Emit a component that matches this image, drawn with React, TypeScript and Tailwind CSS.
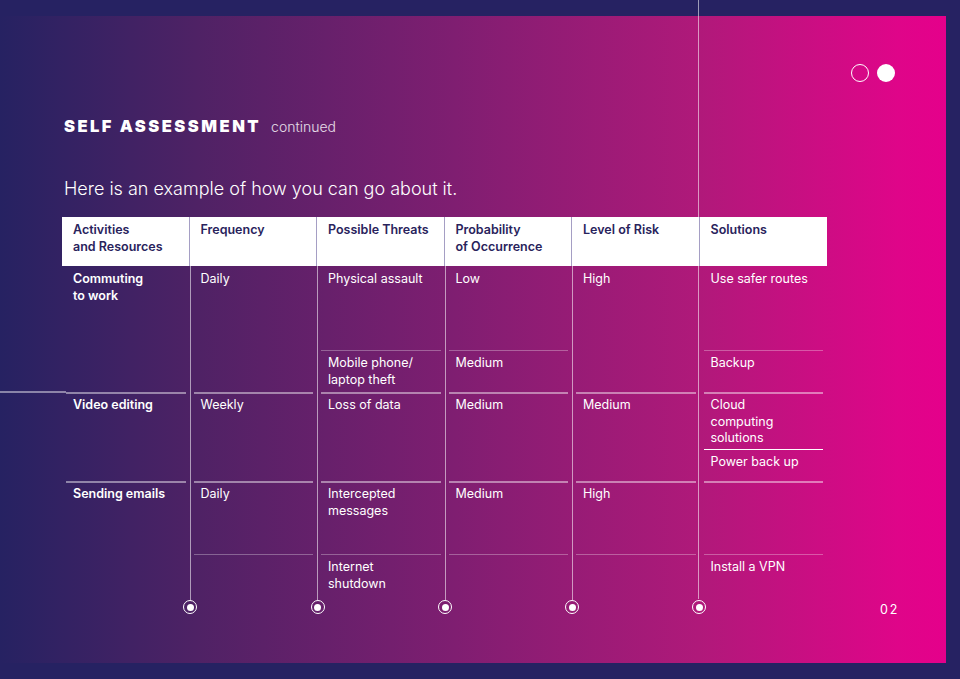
import React from "react";

type Line = "none" | "main" | "sub" | "solid";
type Cell = { t: string[]; h: number; line: Line };
type Col = { head: string[]; bold?: boolean; cells: Cell[] };

const cols: Col[] = [
  {
    head: ["Activities", "and Resources"],
    bold: true,
    cells: [
      { t: ["Commuting", "to work"], h: 126, line: "none" },
      { t: ["Video editing"], h: 89, line: "main" },
      { t: ["Sending emails"], h: 115, line: "main" },
    ],
  },
  {
    head: ["Frequency"],
    cells: [
      { t: ["Daily"], h: 126, line: "none" },
      { t: ["Weekly"], h: 89, line: "main" },
      { t: ["Daily"], h: 73, line: "main" },
      { t: [], h: 42, line: "sub" },
    ],
  },
  {
    head: ["Possible Threats"],
    cells: [
      { t: ["Physical assault"], h: 84, line: "none" },
      { t: ["Mobile phone/", "laptop theft"], h: 42, line: "sub" },
      { t: ["Loss of data"], h: 89, line: "main" },
      { t: ["Intercepted", "messages"], h: 73, line: "main" },
      { t: ["Internet", "shutdown"], h: 42, line: "sub" },
    ],
  },
  {
    head: ["Probability", "of Occurrence"],
    cells: [
      { t: ["Low"], h: 84, line: "none" },
      { t: ["Medium"], h: 42, line: "sub" },
      { t: ["Medium"], h: 89, line: "main" },
      { t: ["Medium"], h: 73, line: "main" },
      { t: [], h: 42, line: "sub" },
    ],
  },
  {
    head: ["Level of Risk"],
    cells: [
      { t: ["High"], h: 126, line: "none" },
      { t: ["Medium"], h: 89, line: "main" },
      { t: ["High"], h: 73, line: "main" },
      { t: [], h: 42, line: "sub" },
    ],
  },
  {
    head: ["Solutions"],
    cells: [
      { t: ["Use safer routes"], h: 84, line: "none" },
      { t: ["Backup"], h: 42, line: "sub" },
      { t: ["Cloud", "computing", "solutions"], h: 57, line: "main" },
      { t: ["Power back up"], h: 32, line: "solid" },
      { t: [], h: 73, line: "main" },
      { t: ["Install a VPN"], h: 42, line: "sub" },
    ],
  },
];

const lineCls: Record<Line, string> = {
  none: "pt-[5px]",
  main: "border-t-2 border-white/45 pt-[3px]",
  sub: "border-t border-white/30 pt-[4px]",
  solid: "border-t border-white pt-[4px]",
};

function Ring() {
  return (
    <div className="w-[14px] h-[14px] rounded-full border-[1.5px] border-white flex items-center justify-center">
      <div className="w-[7px] h-[7px] rounded-full bg-white" />
    </div>
  );
}

export default function App() {
  const lineXs = [127.5, 255, 382.5, 509.5];
  return (
    <div
      className="relative w-[960px] h-[679px] bg-[#262262] pt-[16px] overflow-hidden"
      style={{ fontFamily: "Inter, 'Open Sans', sans-serif" }}
    >
      {/* long vertical line from top of page */}
      <div className="absolute left-[698px] top-0 w-px h-[599px] bg-white/55" />
      {/* horizontal line from left edge */}
      <div className="absolute left-0 top-[391px] w-[66px] h-[2px] bg-white/45" />

      <div className="w-[946px] h-[647px] bg-[linear-gradient(90deg,#262262_0%,#4f2265_21%,#7f1e71_48%,#b0197a_74%,#df0589_95%,#e5008b_100%)] flex flex-col pt-[48px]">
        {/* top dots */}
        <div className="flex justify-end gap-[8px] pr-[51px]">
          <div className="w-[18px] h-[18px] rounded-full border border-white" />
          <div className="w-[18px] h-[18px] rounded-full bg-white" />
        </div>

        <div className="pl-[64px] mt-[34px] flex items-baseline">
          <span className="text-white text-[16.5px] leading-[20px] font-black tracking-[0.15em]">
            SELF ASSESSMENT
          </span>
          <span className="text-white/85 text-[14px] font-light ml-[10px]">continued</span>
        </div>

        <p className="pl-[64px] mt-[40px] text-white text-[18px] leading-[24px] font-light">
          Here is an example of how you can go about it.
        </p>

        <div className="flex items-end mt-[16px] pl-[62px]">
          <div className="relative w-[765px] pb-[19px]">
            {lineXs.map((x, i) => (
              <div
                key={i}
                className="absolute top-0 w-px h-[383px] bg-white/55"
                style={{ left: x }}
              />
            ))}
            {[...lineXs, 636.5].map((x, i) => (
              <div
                key={"c" + i}
                className="absolute top-[383px]"
                style={{ left: x - 6.5 }}
              >
                <Ring />
              </div>
            ))}
            <div className="relative grid grid-cols-6">
              {cols.map((c, ci) => (
                <div key={ci} className="flex flex-col">
                  <div
                    className={`h-[49px] bg-white pl-[11px] pt-[5px] text-[12.5px] leading-[16.5px] font-semibold text-[#29235c] ${
                      ci < 5 ? "border-r border-[#a59ec4]" : ""
                    }`}
                  >
                    {c.head.map((l, i) => (
                      <div key={i}>{l}</div>
                    ))}
                  </div>
                  {c.cells.map((cell, i) => (
                    <div
                      key={i}
                      className={`mx-[4px] pl-[7px] text-white text-[12.5px] leading-[16.5px] ${
                        c.bold ? "font-semibold" : "font-normal"
                      } ${lineCls[cell.line]}`}
                      style={{ height: cell.h }}
                    >
                      {cell.t.map((l, j) => (
                        <div key={j}>{l}</div>
                      ))}
                    </div>
                  ))}
                </div>
              ))}
            </div>
          </div>
          <div className="ml-[53px] mb-[-5px] text-white text-[12.5px] tracking-[0.15em]">02</div>
        </div>
      </div>
    </div>
  );
}
